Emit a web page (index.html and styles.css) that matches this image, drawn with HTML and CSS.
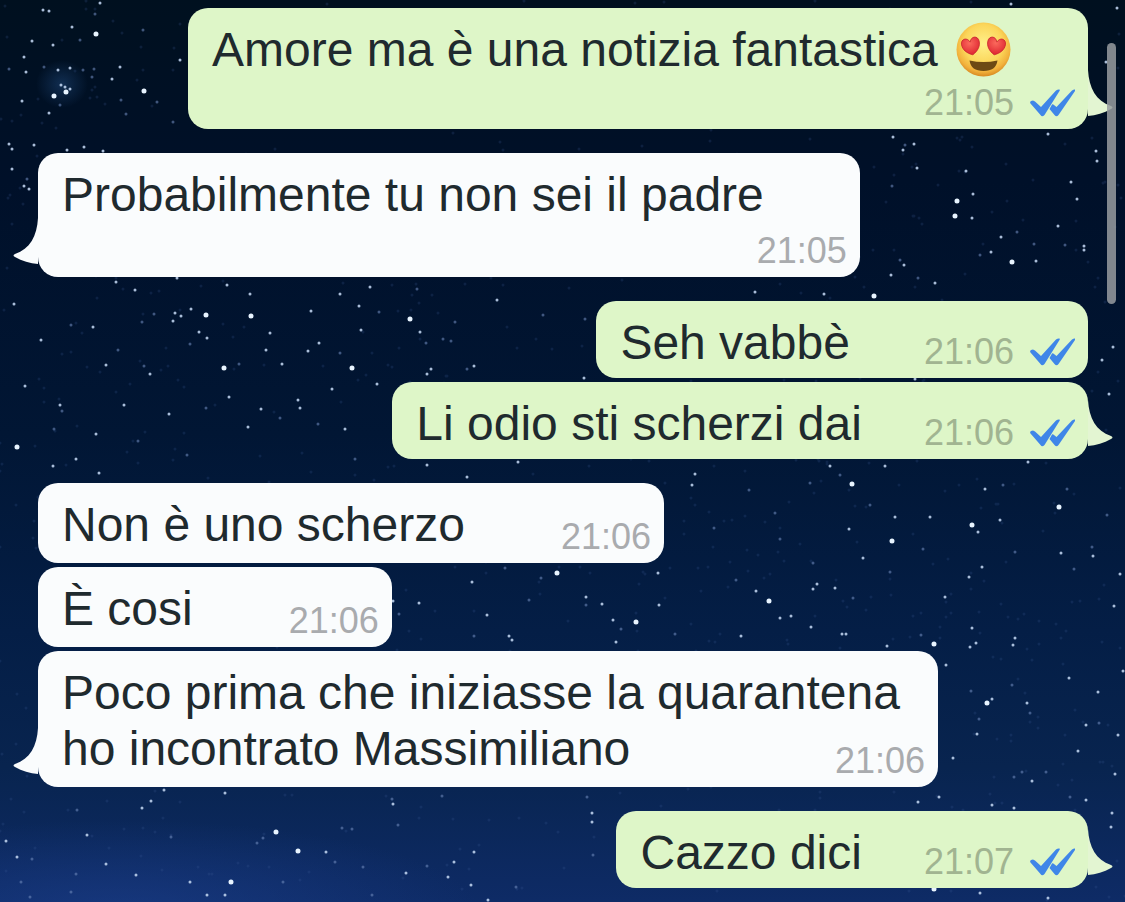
FILE: index.html
```
<!DOCTYPE html>
<html lang="it">
<head>
<meta charset="utf-8">
<meta name="viewport" content="width=device-width, initial-scale=1">
<title>Chat</title>
<link rel="stylesheet" href="styles.css">
</head>
<body>
<svg class="sky" viewBox="0 0 1125 902" preserveAspectRatio="xMidYMid slice" aria-hidden="true">
  <defs>
    <radialGradient id="glow"><stop offset="0" stop-color="#2a5a96" stop-opacity=".4"/><stop offset="1" stop-color="#2a5a96" stop-opacity="0"/></radialGradient>
    <radialGradient id="milky"><stop offset="0" stop-color="#1c3f8c" stop-opacity=".6"/><stop offset="1" stop-color="#1c3f8c" stop-opacity="0"/></radialGradient>
  </defs>
  <ellipse cx="62" cy="84" rx="26" ry="24" fill="url(#glow)"/>
  <ellipse cx="120" cy="910" rx="360" ry="90" fill="url(#milky)"/>
  <path class="faint" id="faint"/>
  <path class="dim" id="dim"/>
  <path class="mid" id="mid"/>
  <path class="bright" id="bright"/>
</svg>

<svg class="symbols" aria-hidden="true">
  <symbol id="ticks" viewBox="0 0 45 28">
    <path d="M.5 14.5Q-.5 13 1 12L3 11.5L5 12.5L11 18L26 1.5Q28 0 29.5 .5Q30 1 29.5 2L14.500 26Q12 28.500 10.500 26Z"/>
    <path d="M19.500 20L22 15.500Q23 15 24 16L26.500 18L42 1.500Q44 0 45 .5Q45.500 1 45 2L28.500 26Q26.500 28.500 24.500 26Z"/>
  </symbol>
  <symbol id="tail" viewBox="0 0 25 48">
    <path d="M0 0C1 18 8 31 23 36Q26 37.500 23 39C16 43 8 45.500 0 46Z"/>
  </symbol>
</svg>

<main class="chat">
  <section class="group sent">
    <article class="bubble stacked">
      <p class="text">Amore ma è una notizia fantastica <svg class="emoji" viewBox="0 0 55 55" role="img" aria-label="faccina con occhi a cuore">
        <defs>
          <radialGradient id="face" cx=".5" cy=".4" r=".6"><stop offset="0" stop-color="#fff08a"/><stop offset=".6" stop-color="#fbd65a"/><stop offset=".85" stop-color="#f2b23c"/><stop offset="1" stop-color="#d98a22"/></radialGradient>
          <radialGradient id="heart" cx=".45" cy=".3" r=".7"><stop offset="0" stop-color="#fb6a5c"/><stop offset="1" stop-color="#de2430"/></radialGradient>
          <path id="heartShape" d="M0 9C-6 6-9 2-9-3C-9-9-2-10 0-4C2-10 9-9 9-3C9 2 6 6 0 9Z"/>
        </defs>
        <circle cx="27.500" cy="27.500" r="27" fill="url(#face)"/>
        <use href="#heartShape" fill="url(#heart)" stroke="#c4202c" stroke-width=".7" transform="translate(15 24) rotate(-12)"/>
        <use href="#heartShape" fill="url(#heart)" stroke="#c4202c" stroke-width=".7" transform="translate(40 24) rotate(12)"/>
        <path d="M13.500 38.500Q27.500 41.500 41.500 38.500Q40 49 27.500 49Q15 49 13.500 38.500Z" fill="#6d4a14"/>
      </svg></p>
      <footer class="meta"><time>21:05</time><svg class="ticks" role="img" aria-label="letto"><use href="#ticks"/></svg></footer>
      <svg class="tail" aria-hidden="true"><use href="#tail"/></svg>
    </article>
  </section>

  <section class="group received">
    <article class="bubble stacked">
      <p class="text">Probabilmente tu non sei il padre</p>
      <footer class="meta"><time>21:05</time></footer>
      <svg class="tail" aria-hidden="true"><use href="#tail"/></svg>
    </article>
  </section>

  <section class="group sent">
    <article class="bubble roomy">
      <p class="text">Seh vabbè</p>
      <footer class="meta"><time>21:06</time><svg class="ticks" role="img" aria-label="letto"><use href="#ticks"/></svg></footer>
    </article>
    <article class="bubble">
      <p class="text">Li odio sti scherzi dai</p>
      <footer class="meta"><time>21:06</time><svg class="ticks" role="img" aria-label="letto"><use href="#ticks"/></svg></footer>
      <svg class="tail" aria-hidden="true"><use href="#tail"/></svg>
    </article>
  </section>

  <section class="group received">
    <article class="bubble">
      <p class="text">Non è uno scherzo</p>
      <footer class="meta"><time>21:06</time></footer>
    </article>
    <article class="bubble">
      <p class="text">È cosi</p>
      <footer class="meta"><time>21:06</time></footer>
    </article>
    <article class="bubble multiline">
      <p class="text">Poco prima che iniziasse la quarantena ho incontrato Massimiliano<time class="meta">21:06</time></p>
      <svg class="tail" aria-hidden="true"><use href="#tail"/></svg>
    </article>
  </section>

  <section class="group sent">
    <article class="bubble">
      <p class="text">Cazzo dici</p>
      <footer class="meta"><time>21:07</time><svg class="ticks" role="img" aria-label="letto"><use href="#ticks"/></svg></footer>
      <svg class="tail" aria-hidden="true"><use href="#tail"/></svg>
    </article>
  </section>
</main>
<div class="scroll-thumb" aria-hidden="true"></div>
<script src="stars.js"></script>
</body>
</html>
```

FILE: styles.css
```
* {
  box-sizing: border-box;
}

body {
  position: relative;
  margin: 0;
  min-height: 100vh;
  overflow: hidden;
  background: linear-gradient(#00101f, #001029 20%, #011634 48%, #041e46 70%, #08244f 85%, #0e2b66);
  font-family: "Liberation Sans", Arial, sans-serif;
  color: #1f2a2e;
}

.sky {
  position: absolute;
  inset: 0;
  width: 100%;
  height: 100%;
}

.sky path {
  fill: none;
  stroke-linecap: round;
}

.faint {
  stroke: #3b5d95;
  stroke-width: 3px;
  opacity: 0.22;
}

.dim {
  stroke: #6a86b8;
  stroke-width: 3px;
  opacity: 0.6;
}

.mid {
  stroke: #bcd0ec;
  stroke-width: 3px;
  opacity: 0.9;
}

.bright {
  stroke: #e8f4ff;
  stroke-width: 5px;
}

.symbols {
  position: absolute;
  width: 0;
  height: 0;
}

.chat {
  position: relative;
  display: flex;
  flex-direction: column;
  gap: 24px;
  padding: 8px 37px 14px 38px;
}

.group {
  display: flex;
  flex-direction: column;
  gap: 4px;
}

.sent {
  align-items: flex-end;
}

.received {
  align-items: flex-start;
}

.bubble {
  position: relative;
  display: flex;
  align-items: flex-end;
  justify-content: space-between;
  gap: 62px;
  max-width: 80vw;
  padding: 14px 13px 6px 24px;
  border-radius: 20px;
}

.sent .bubble {
  background: #def6c8;
}

.received .bubble {
  gap: 96px;
  background: #fafcfd;
}

.sent .roomy {
  gap: 74px;
}

.text {
  margin: 0;
  padding-bottom: 1px;
  font-size: 48px;
  line-height: 56px;
}

.received .text {
  padding-bottom: 4px;
}

.emoji {
  width: 55px;
  height: 55px;
  margin-left: 5px;
  vertical-align: -11px;
}

.meta {
  display: flex;
  align-items: center;
  gap: 16px;
  font-size: 36px;
  line-height: 40px;
  color: #a9abae;
}

.sent .meta {
  color: #a1b491;
}

.ticks {
  width: 45px;
  height: 28px;
  fill: #3f86e8;
}

.bubble.stacked {
  flex-direction: column;
  align-items: flex-end;
  gap: 4px;
}

.stacked .text {
  width: 100%;
}

.received .stacked .text {
  padding-right: 83px;
}

.sent .stacked {
  width: 80vw;
}

.multiline .text {
  display: flow-root;
  padding-bottom: 0;
}

.multiline .meta {
  float: right;
  margin-top: 20px;
}

.tail {
  position: absolute;
  bottom: 11px;
  left: 100%;
  width: 25px;
  height: 48px;
  fill: #e3f5d2;
}

.received .tail {
  right: 100%;
  left: auto;
  fill: #fafcfd;
  transform: scaleX(-1);
}

.scroll-thumb {
  position: absolute;
  top: 43px;
  right: 9px;
  width: 9px;
  height: 261px;
  border-radius: 5px;
  background: rgba(152, 156, 160, 0.85);
}
```

FILE: stars.js
```
// Star positions as x,y pairs in the sky's 1125 x 902 coordinate space.
const stars = {
  bright: "206,315 251,316 410,319 224,368 352,368 17,447 852,484 892,541 1059,507 972,525 769,601 934,644 231,882 276,832 298,851 874,296 96,34 144,91 54,96 66,92 957,201 955,216 1012,262 987,703 934,889 557,573 636,622",
  mid: "116,282 135,290 14,304 93,327 191,309 175,313 181,316 173,321 199,332 207,338 270,333 250,294 340,294 370,287 359,306 311,311 361,330 420,332 497,300 319,343 266,350 308,351 431,369 427,374 474,366 377,384 332,389 282,364 298,400 300,408 261,409 229,397 248,427 169,414 345,429 124,405 96,434 53,466 99,473 25,386 60,405 76,459 427,465 467,477 518,462 41,340 106,365 150,374 885,466 830,466 695,474 692,485 895,517 930,517 978,532 1000,520 849,529 863,558 985,489 1028,462 1061,553 1093,556 1120,574 1114,606 982,567 969,577 945,597 813,589 817,584 835,588 756,591 791,616 780,618 811,627 842,634 846,634 741,636 972,628 976,643 970,647 1015,638 1013,645 887,646 164,790 151,801 142,808 6,841 87,835 106,864 136,875 190,882 207,895 225,895 326,852 393,804 406,873 454,862 448,877 471,885 488,900 592,813 592,822 474,852 225,793 17,857 755,292 824,294 915,379 1113,347 1102,360 1109,394 584,378 43,10 49,11 100,3 72,27 32,41 53,45 24,57 26,72 70,68 58,70 120,67 112,79 180,60 61,85 65,87 70,89 22,101 49,113 9,144 12,149 34,145 67,150 84,147 103,151 12,169 29,189 24,186 177,278 227,285 893,137 914,144 903,150 917,168 966,171 973,194 972,218 1048,134 1097,161 1096,151 1071,182 1077,199 1058,226 1084,250 1084,246 1001,237 991,252 1036,261 904,265 891,275 935,283 1011,4 1117,8 1106,62 946,665 992,699 1027,703 1069,678 1098,692 1123,671 1086,725 1118,735 1078,751 1115,774 977,734 953,758 1032,781 939,797 918,802 992,805 1014,808 1086,800 1112,813 1111,827 980,893 1048,898 472,582 419,603 393,601 487,615 509,636 512,640 586,597 602,604 613,620 616,642 658,573 659,605",
  dim: "154,314 142,322 144,366 118,350 71,325 417,289 443,339 451,341 426,343 340,353 455,322 467,369 206,408 280,418 318,424 138,441 54,429 62,411 187,455 355,459 239,364 190,344 379,312 543,315 775,513 749,490 714,528 780,539 736,580 813,563 890,572 1015,552 1074,569 1067,489 1003,485 840,475 810,483 675,634 921,635 1107,515 1092,547 870,505 853,598 923,549 77,810 263,838 257,843 171,837 352,829 342,828 398,825 335,862 363,867 427,866 32,859 21,882 30,897 71,892 516,887 442,796 587,797 76,874 372,895 392,799 283,882 593,855 585,319 9,69 44,67 83,70 94,69 92,77 121,100 126,114 143,30 80,40 173,122 95,14 60,105 157,102 27,179 892,186 1017,232 1034,244 1065,245 980,255 900,260 918,278 905,145 1014,777 1022,772 1046,772 971,691 979,719 1099,723 1070,797 1030,713 1012,685 505,568 541,578 529,600 474,636 586,605 621,629 399,614"
};

for (const [name, points] of Object.entries(stars)) {
  document.getElementById(name).setAttribute(
    "d", points.split(" ").map(p => `M${p}h0`).join(""));
}

// Faint background dust from a fixed seed, so the sky looks the same each time.
let seed = 7;
const next = () => (seed = (seed * 16807) % 2147483647) / 2147483647;
let dust = "";
for (let i = 0; i < 900; i++) {
  dust += `M${Math.round(next() * 1125)},${Math.round(next() * 902)}h0`;
}
document.getElementById("faint").setAttribute("d", dust);
```
